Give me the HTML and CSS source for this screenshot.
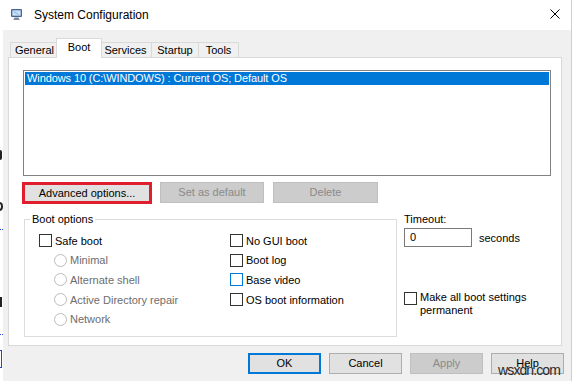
FILE: index.html
```html
<!DOCTYPE html>
<html>
<head>
<meta charset="utf-8">
<title>System Configuration</title>
<link rel="stylesheet" href="styles.css">
</head>
<body>
<div class="screen">
  <div class="backdrop">
    <span class="frag m1"></span>
    <span class="frag m2"></span>
    <span class="frag dots d1"></span>
    <span class="frag m3"></span>
    <span class="frag dots d2"></span>
    <span class="frag linkbox"></span>
  </div>
  <div class="dialog">
    <div class="titlebar">
      <svg class="app-icon" viewBox="0 0 13 13" aria-hidden="true">
        <rect x="1" y="1" width="11" height="8" rx="1" fill="#46679a"/>
        <rect x="2.3" y="2.3" width="8.4" height="5.4" fill="#c9e1f7"/>
        <path d="M3.5 3.5l5 3" stroke="#8fb5de" stroke-width="1"/>
        <path d="M4.5 9.5h4l1.2 2.5H3.3z" fill="#7d8898"/>
      </svg>
      <span class="title">System Configuration</span>
      <svg class="close" viewBox="0 0 10 10" aria-hidden="true">
        <path d="M0.5 0.5L9.5 9.5M9.5 0.5L0.5 9.5" stroke="#000" stroke-width="1"/>
      </svg>
    </div>
    <div class="client">
      <div class="tabs">
        <div class="tab t-general">General</div>
        <div class="tab t-boot active">Boot</div>
        <div class="tab t-services">Services</div>
        <div class="tab t-startup">Startup</div>
        <div class="tab t-tools">Tools</div>
      </div>
      <div class="page">
        <div class="listbox">
          <div class="item selected">Windows 10 (C:\WINDOWS) : Current OS; Default OS</div>
        </div>
        <div class="btn-row">
          <button class="btn highlight">Advanced options...</button>
          <button class="btn disabled b-default">Set as default</button>
          <button class="btn disabled b-delete">Delete</button>
        </div>
        <div class="lower">
          <fieldset class="group">
            <legend>Boot options</legend>
            <div class="opts">
              <div class="col col-left">
                <div class="row check"><span class="box"></span>Safe boot</div>
                <div class="row radio"><span class="circle"></span>Minimal</div>
                <div class="row radio"><span class="circle"></span>Alternate shell</div>
                <div class="row radio"><span class="circle"></span>Active Directory repair</div>
                <div class="row radio"><span class="circle"></span>Network</div>
              </div>
              <div class="col col-right">
                <div class="row check"><span class="box"></span>No GUI boot</div>
                <div class="row check"><span class="box"></span>Boot log</div>
                <div class="row check"><span class="box focus"></span>Base video</div>
                <div class="row check"><span class="box"></span>OS boot information</div>
              </div>
            </div>
          </fieldset>
          <div class="side">
            <div class="timeout-label">Timeout:</div>
            <div class="timeout-row">
              <span class="input">0</span>
              <span class="seconds">seconds</span>
            </div>
            <div class="perm">
              <span class="box"></span>
              <span class="perm-text">Make all boot settings<br>permanent</span>
            </div>
          </div>
        </div>
      </div>
      <div class="footer">
        <button class="btn fbtn default">OK</button>
        <button class="btn fbtn">Cancel</button>
        <button class="btn fbtn disabled">Apply</button>
        <button class="btn fbtn">Help</button>
      </div>
    </div>
  </div>
  <div class="backdrop-right"></div>
  <div class="watermark">wsxdn.com</div>
</div>
</body>
</html>
```
FILE: styles.css
```css
* { box-sizing: border-box; }
html, body { margin: 0; padding: 0; }
body {
  width: 573px;
  height: 381px;
  overflow: hidden;
  background: #fff;
  font-family: "Liberation Sans", Arial, sans-serif;
  font-size: 11px;
  color: #000;
}
.screen {
  display: flex;
  width: 573px;
  height: 381px;
  position: relative;
}

/* background page peeking out on the left */
.backdrop {
  width: 3px;
  flex: none;
  position: relative;
  overflow: hidden;
  background: #fff;
}
.backdrop-right { width: 1px; flex: none; background: #fff; }
.frag { position: absolute; }
.m1 { top: 150px; left: 0; width: 2px; height: 10px; border-right: 2px solid #222; border-radius: 0 3px 3px 0; }
.m2 { top: 202px; left: -4px; width: 7px; height: 9px; border: 2px solid #222; border-radius: 50%; }
.m3 { top: 297px; left: -4px; width: 6px; height: 10px; border-right: 2px solid #222; border-bottom: 2px solid #222; }
.dots { left: 0; width: 3px; height: 1px; border-top: 1px dotted #2b4fd8; }
.d1 { top: 229px; }
.d2 { top: 334px; }
.linkbox { top: 350px; left: -6px; width: 8px; height: 18px; border: 1px solid #2b3fd0; }

.dialog {
  flex: 1;
  display: flex;
  flex-direction: column;
  border-right: 1px solid #cfcfcf;
}
.titlebar {
  height: 30px;
  flex: none;
  background: #fff;
  display: flex;
  align-items: center;
}
.app-icon { width: 13px; height: 13px; margin-left: 7px; margin-top: -1px; }
.title { margin-left: 11px; font-size: 12px; }
.close { width: 10px; height: 10px; margin-left: auto; margin-right: 11px; margin-top: -2px; }

.client {
  flex: 1;
  background: #f0f0f0;
  padding: 8px 9px 0 5px;
  display: flex;
  flex-direction: column;
}

/* tabs */
.tabs {
  display: flex;
  align-items: flex-end;
  height: 19px;
  padding-left: 2px;
}
.tab {
  height: 15px;
  line-height: 14px;
  border: 1px solid #d9d9d9;
  border-bottom: none;
  margin-right: -1px;
  text-align: center;
  background: #f0f0f0;
}
.t-general { width: 49px; }
.t-boot { width: 42px; }
.t-services { width: 53px; }
.t-startup { width: 48px; }
.t-tools { width: 41px; }
.tab.active {
  height: 20px;
  line-height: 16px;
  width: 46px;
  margin-left: -2px;
  margin-right: -3px;
  margin-bottom: -1px;
  background: #fff;
  position: relative;
  z-index: 1;
}

/* tab page */
.page {
  background: #fff;
  border: 1px solid #d9d9d9;
  padding: 12px 0 8px 14px;
}
.listbox {
  width: 528px;
  height: 106px;
  border: 1px solid #828282;
  padding: 1px;
  background: #fff;
}
.item {
  height: 13px;
  line-height: 13px;
  padding-left: 2px;
  white-space: nowrap;
  letter-spacing: -0.1px;
}
.item.selected { background: #0078d7; color: #fff; }

.btn-row {
  display: flex;
  align-items: flex-start;
  gap: 8px;
  margin-top: 6px;
  height: 22px;
}
.btn {
  height: 21px;
  border: 1px solid #adadad;
  background: #e1e1e1;
  font: inherit;
  color: #000;
  padding: 0;
  line-height: 19px;
  text-align: center;
}
.btn.highlight {
  width: 130px;
  height: 22px;
  margin-left: -1px;
  border: 3px solid #df1f2d;
  line-height: 16px;
}
.btn.disabled { background: #cccccc; border-color: #bfbfbf; color: #8a8a8a; }
.b-default { width: 104px; }
.b-delete { width: 105px; margin-left: 1px; }

.lower { display: flex; margin-top: 8px; }
.group {
  margin: 0 0 0 1px;
  width: 373px;
  height: 125px;
  border: 1px solid #dcdcdc;
  padding: 0;
  min-width: 0;
}
.group legend {
  margin-left: 5px;
  padding: 0 2px;
  line-height: 14px;
}
.opts { display: flex; padding: 5px 0 0 14px; }
.col-left { width: 191px; }
.row {
  height: 19.6px;
  display: flex;
  align-items: center;
  white-space: nowrap;
}
.box {
  width: 13px;
  height: 13px;
  border: 1px solid #333;
  background: #fff;
  margin-right: 3px;
  flex: none;
}
.box.focus { border-color: #0078d7; }
.radio { color: #6d6d6d; }
.circle {
  width: 13px;
  height: 13px;
  border: 1px solid #bcbcbc;
  border-radius: 50%;
  background: #fff;
  margin-left: 15px;
  margin-right: 3px;
  flex: none;
}

.side { margin-left: 7px; display: flex; flex-direction: column; }
.timeout-label { line-height: 14px; }
.timeout-row { display: flex; align-items: center; margin-top: 2px; }
.input {
  width: 68px;
  height: 19px;
  border: 1px solid #7a7a7a;
  background: #fff;
  padding-left: 5px;
  line-height: 17px;
}
.seconds { margin-left: 7px; }
.perm { display: flex; align-items: flex-start; margin-top: 45px; }
.perm .box { margin-right: 3px; }
.perm-text { line-height: 13px; margin-top: -1px; }

.footer {
  display: flex;
  justify-content: flex-end;
  gap: 8px;
  margin-top: 7px;
  margin-right: -2px;
}
.fbtn { width: 73px; }
.fbtn.default { border: 2px solid #0078d7; line-height: 17px; }

.watermark {
  position: absolute;
  right: 13px;
  bottom: 3px;
  font-size: 14px;
  letter-spacing: -0.9px;
  color: #2a2a2a;
  line-height: 16px;
}
```
